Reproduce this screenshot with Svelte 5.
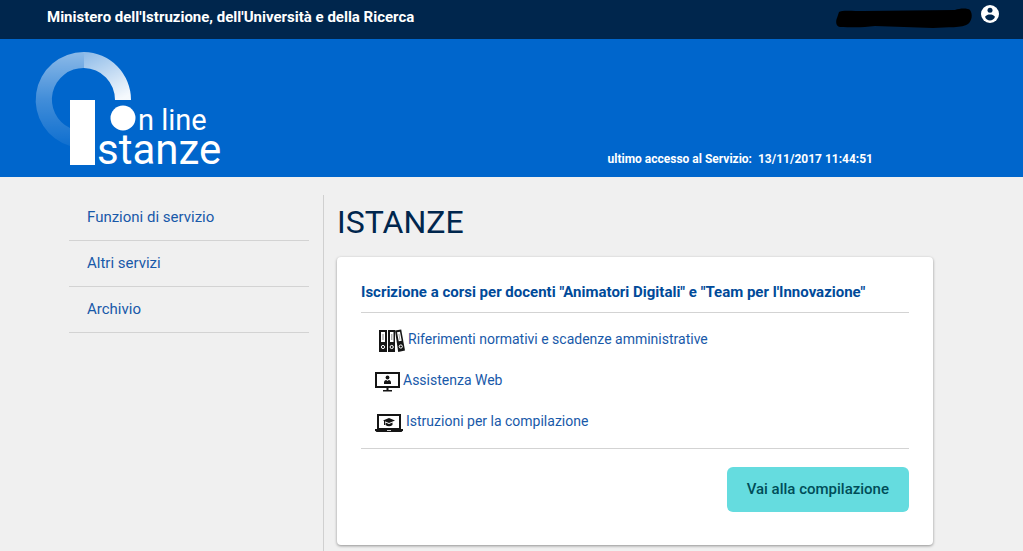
<script>
  const menu = ['Funzioni di servizio', 'Altri servizi', 'Archivio'];
  const resources = [
    { icon: 'binders', label: 'Riferimenti normativi e scadenze amministrative' },
    { icon: 'monitor', label: 'Assistenza Web' },
    { icon: 'laptop', label: 'Istruzioni per la compilazione' }
  ];
</script>

<div class="page">
  <div class="topbar">
    <a class="ministry" href="#ministero">Ministero dell'Istruzione, dell'Università e della Ricerca</a>
    <div class="user">
      <svg width="139" height="22" viewBox="0 0 139 22" aria-hidden="true">
        <path fill="#000" d="M4 4 C6 2 18 3 28 3 L120 2 C125 0 133 0 135 2 C138 6 137 13 133 16 C128 20 112 19 98 20 L40 18 C26 20 14 19 5 19 C0 18 1 12 2 10 Z" />
      </svg>
      <button class="account" aria-label="Profilo">
        <svg width="18" height="18" viewBox="0 0 18 18">
          <circle cx="9" cy="9" r="9" fill="#fff" />
          <circle cx="9" cy="5.300" r="2.500" fill="#00264d" />
          <path d="M4 11.800C5.300 9.900 7 9.500 9 9.500s3.700.4 5 2.300C13 14.300 11.200 15.500 9 15.500S5 14.300 4 11.800Z" fill="#00264d" />
        </svg>
      </button>
    </div>
  </div>

  <header>
    <svg class="logo" width="190" height="126" viewBox="34 50 190 126" role="img" aria-label="Istanze on line">
      <defs>
        <linearGradient id="ringLeft" gradientUnits="userSpaceOnUse" x1="0" y1="52" x2="0" y2="146">
          <stop offset="0" stop-color="#fff" stop-opacity=".55" />
          <stop offset=".5" stop-color="#fff" stop-opacity=".26" />
          <stop offset="1" stop-color="#fff" stop-opacity=".06" />
        </linearGradient>
        <linearGradient id="ringRight" gradientUnits="userSpaceOnUse" x1="84" y1="52" x2="110" y2="104">
          <stop offset="0" stop-color="#fff" stop-opacity=".55" />
          <stop offset="1" stop-color="#fff" stop-opacity=".96" />
        </linearGradient>
      </defs>
      <path d="M84 52A48 48 0 0 0 70 146V128A31.500 31.500 0 0 1 84 68Z" fill="url(#ringLeft)" />
      <path d="M84 52A47.500 48 0 0 1 131 100H115A31.500 32 0 0 0 84 68Z" fill="url(#ringRight)" />
      <rect x="70" y="100" width="25" height="65" fill="#fff" />
      <circle cx="123" cy="118" r="12.500" fill="#fff" />
      <text x="138" y="130" font-size="29">n line</text>
      <text x="97" y="164" font-size="42">stanze</text>
    </svg>
    <p class="access">ultimo accesso al Servizio:&nbsp; 13/11/2017 11:44:51</p>
  </header>

  <div class="content">
    <nav>
      {#each menu as item}
        <a href="#menu">{item}</a>
      {/each}
    </nav>

    <main>
      <h1>ISTANZE</h1>
      <section class="card">
        <h2>Iscrizione a corsi per docenti "Animatori Digitali" e "Team per l'Innovazione"</h2>
        <ul>
          {#each resources as { icon, label }}
            <li class={icon}>
              <a href="#risorsa">
                {#if icon === 'binders'}
                  <svg width="26" height="24" viewBox="0 0 26 24" fill="#151515">
                    <path d="M0 1h8v22H0zM9 1h7v22H9z" />
                    <path d="M16 1.600 22.200.5 26 21.500 19.200 23Z" />
                    <path d="M2 3h4v10H2zM11 3h3.500v10H11zM18 3.200l3-.5 1.700 9-3 .6z" fill="#fff" />
                    <path d="M3.300 5h1.400v6H3.300zM12 5h1.400v6H12zM19.400 5l1-.2 1 6-1 .2z" fill="#aaa" />
                    <g fill="none" stroke="#fff"><circle cx="4" cy="18" r="1.600" /><circle cx="12.700" cy="18" r="1.600" /><circle cx="21.800" cy="17.500" r="1.600" /></g>
                  </svg>
                {:else if icon === 'monitor'}
                  <svg width="25" height="20" viewBox="0 0 25 20" fill="#151515">
                    <rect x="1" y="1" width="23" height="14" fill="#fff" stroke="#151515" stroke-width="2" />
                    <circle cx="12.500" cy="5.500" r="1.900" />
                    <path d="M9 12V10.500c0-1.500 1-2.300 2.200-2.500l1.300 1 1.300-1c1.200.2 2.200 1 2.200 2.500V12ZM11.500 15h2v3H17v1.500H8V18h3.500Z" />
                  </svg>
                {:else}
                  <svg width="28" height="18" viewBox="0 0 28 18" fill="#151515">
                    <rect x="3" y="1" width="22" height="14" fill="#fff" stroke="#151515" stroke-width="2" />
                    <path d="M0 15h28v1.500L26.500 18h-25L0 16.500Z" />
                    <path d="m14 4 6 2.500L14 9 8 6.500ZM10.500 8.500 14 10l3.500-1.500V11c-2 1.600-5 1.600-7 0ZM9 7h1v4H9z" />
                    <path d="M12 16h4v.8h-4z" fill="#fff" />
                  </svg>
                {/if}
                <span>{label}</span>
              </a>
            </li>
          {/each}
        </ul>
        <div class="actions">
          <button class="primary">Vai alla compilazione</button>
        </div>
      </section>
    </main>
  </div>
</div>

<style>
  :global(body) {
    background: #f0f0f0;
  }
  .page {
    display: flex;
    flex-direction: column;
    min-height: 100vh;
    box-sizing: border-box;
    font-family: Roboto, sans-serif;
    color: #00264d;
  }
  a {
    color: #1859a9;
    text-decoration: none;
  }
  button {
    border: 0;
    font-family: inherit;
    cursor: pointer;
  }
  .topbar {
    flex: none;
    display: flex;
    justify-content: space-between;
    align-items: flex-start;
    height: 39px;
    padding: 0 24px 0 47px;
    background: #00264d;
  }
  .ministry {
    color: #fff;
    font-size: 15px;
    font-weight: 700;
    line-height: 35px;
  }
  .user {
    display: flex;
    align-items: flex-start;
    gap: 7px;
  }
  .user > svg {
    margin-top: 8px;
  }
  .account {
    display: block;
    margin-top: 5px;
    padding: 0;
    background: none;
  }
  .account svg {
    display: block;
  }
  header {
    flex: none;
    display: flex;
    justify-content: space-between;
    align-items: flex-end;
    padding: 11px 150px 1px 34px;
    background: #0066cc;
  }
  .logo {
    display: block;
    overflow: visible;
  }
  .logo text {
    fill: #fff;
    font-family: Roboto, sans-serif;
  }
  .access {
    margin: 0 0 7px;
    color: #fff;
    font-size: 12px;
    font-weight: 700;
    line-height: 20px;
  }
  .content {
    flex: 1;
    display: flex;
    gap: 14px;
    padding: 18px 90px 0 69px;
  }
  nav {
    flex: 0 0 240px;
  }
  nav a {
    display: block;
    padding: 0 18px;
    border-bottom: 1px solid #d3d3d3;
    font-size: 15px;
    line-height: 45px;
  }
  main {
    flex: 1;
    min-width: 0;
    padding: 0 0 6px 13px;
    border-left: 1px solid #d0d0d0;
  }
  h1 {
    margin: 0;
    padding: 7px 0 15px;
    font-size: 32px;
    font-weight: 400;
    line-height: 40px;
  }
  .card {
    padding: 15px 24px 33px;
    border-radius: 4px;
    background: #fff;
    box-shadow: 0 1px 3px rgba(0, 0, 0, 0.4);
  }
  h2 {
    margin: 0;
    border-bottom: 1px solid #d3d3d3;
    color: #004a99;
    font-size: 15px;
    font-weight: 700;
    line-height: 40px;
  }
  ul {
    margin: 0;
    padding: 6px 0;
    border-bottom: 1px solid #d3d3d3;
    list-style: none;
  }
  li {
    padding-left: 14px;
    font-size: 14px;
    line-height: 41px;
  }
  li.binders {
    padding-left: 18px;
  }
  li a {
    display: flex;
    align-items: center;
    gap: 3px;
  }
  li svg {
    margin-top: 3px;
  }
  .actions {
    display: flex;
    justify-content: flex-end;
    padding-top: 18px;
  }
  .primary {
    padding: 0 20px;
    border-radius: 6px;
    background: #65dcdf;
    color: #004d58;
    font-size: 15px;
    font-weight: 500;
    line-height: 45px;
  }
</style>
